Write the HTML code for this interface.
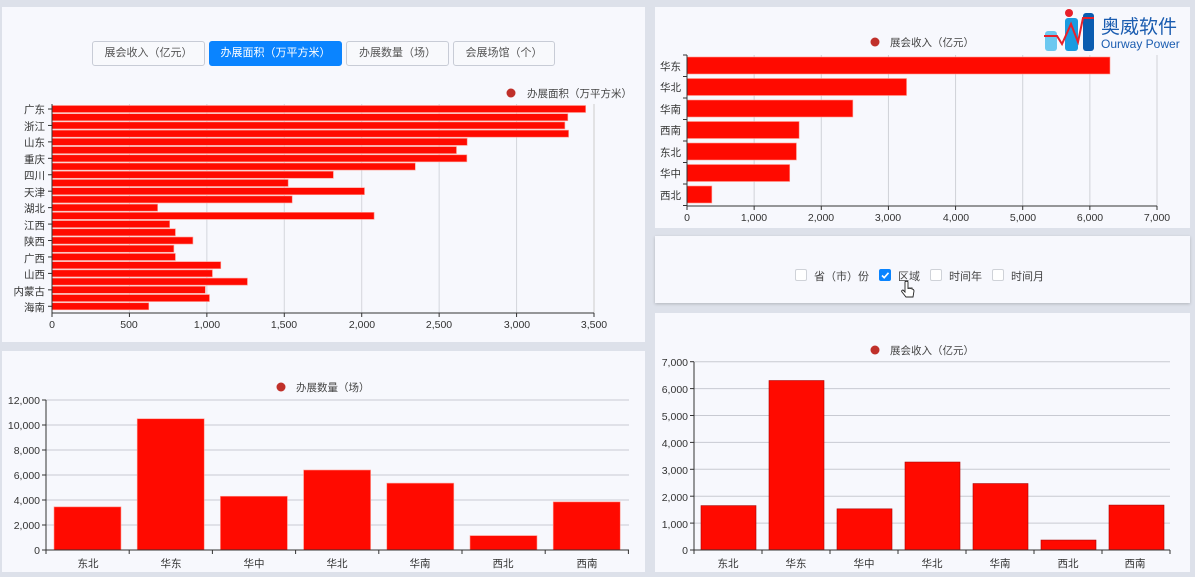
<!DOCTYPE html>
<html><head><meta charset="utf-8">
<style>
*{margin:0;padding:0;box-sizing:border-box}
body{width:1195px;height:577px;background:#dde1ea;position:relative;overflow:hidden;font-family:"Liberation Sans","Noto Sans CJK SC",sans-serif;color:#333}
.p{position:absolute;background:#f7f8fd}
svg{position:absolute;left:0;top:0}
.btn{position:absolute;top:41px;height:25px;border:1px solid #c8ccd6;border-radius:3px;background:#f8f9fc;font-size:11px;color:#555;text-align:center;line-height:23px}
.btn.on{background:#0a84ff;border-color:#0a84ff;color:#fff}
.cb{position:absolute;top:269px;width:12px;height:12px;border:1px solid #cfd2d8;background:#fff;border-radius:2px}
.cl{position:absolute;top:268px;font-size:11px;color:#444}
</style></head><body>
<div class="p" style="left:2px;top:7px;width:643px;height:335px"></div>
<div class="p" style="left:2px;top:351px;width:643px;height:221px"></div>
<div class="p" style="left:655px;top:7px;width:535px;height:221px"></div>
<div class="p" style="left:655px;top:236px;width:535px;height:67px;box-shadow:0 1px 3px rgba(0,0,0,.2)"></div>
<div class="p" style="left:655px;top:313px;width:535px;height:259px"></div>

<div class="btn" style="left:92px;width:113px">展会收入（亿元）</div>
<div class="btn on" style="left:209px;width:133px">办展面积（万平方米）</div>
<div class="btn" style="left:346px;width:103px">办展数量（场）</div>
<div class="btn" style="left:453px;width:102px">会展场馆（个）</div>

<div class="cb" style="left:795px"></div><div class="cl" style="left:814px">省（市）份</div>
<div class="cb" style="left:879px;background:#0a84ff;border-color:#0a84ff"><svg width="12" height="12" style="left:-1px;top:-1px"><path d="M3 6.5L5.2 8.7L9.5 3.8" stroke="#fff" stroke-width="1.6" fill="none"/></svg></div><div class="cl" style="left:898px">区域</div>
<div class="cb" style="left:930px"></div><div class="cl" style="left:949px">时间年</div>
<div class="cb" style="left:992px"></div><div class="cl" style="left:1011px">时间月</div>

<svg width="1195" height="577" font-family="Liberation Sans,Noto Sans CJK SC,sans-serif" font-size="10.5" fill="#333">
<g id="tl"></g><g id="tr"></g><g id="bl"></g><g id="br"></g>
<circle cx="511" cy="93" r="4.5" fill="#c0302a"/><text x="527" y="97" fill="#444">办展面积（万平方米）</text>
<circle cx="875" cy="42" r="4.5" fill="#c0302a"/><text x="890" y="46" fill="#444">展会收入（亿元）</text>
<circle cx="281" cy="387" r="4.5" fill="#c0302a"/><text x="296" y="391" fill="#444">办展数量（场）</text>
<circle cx="875" cy="350" r="4.5" fill="#c0302a"/><text x="890" y="354" fill="#444">展会收入（亿元）</text>
<g text-anchor="end">
<text x="45" y="113">广东</text><text x="45" y="130">浙江</text><text x="45" y="146">山东</text><text x="45" y="163">重庆</text><text x="45" y="179">四川</text><text x="45" y="196">天津</text><text x="45" y="212">湖北</text><text x="45" y="229">江西</text><text x="45" y="245">陕西</text><text x="45" y="262">广西</text><text x="45" y="278">山西</text><text x="45" y="295">内蒙古</text><text x="45" y="311">海南</text>
</g>
<g text-anchor="middle">
<text x="52" y="328">0</text><text x="129" y="328">500</text><text x="207" y="328">1,000</text><text x="284" y="328">1,500</text><text x="362" y="328">2,000</text><text x="439" y="328">2,500</text><text x="517" y="328">3,000</text><text x="594" y="328">3,500</text>
</g>
<g text-anchor="end">
<text x="681" y="70">华东</text><text x="681" y="91">华北</text><text x="681" y="113">华南</text><text x="681" y="134">西南</text><text x="681" y="156">东北</text><text x="681" y="177">华中</text><text x="681" y="199">西北</text>
</g>
<g text-anchor="middle">
<text x="687" y="221">0</text><text x="754" y="221">1,000</text><text x="821" y="221">2,000</text><text x="888" y="221">3,000</text><text x="956" y="221">4,000</text><text x="1023" y="221">5,000</text><text x="1090" y="221">6,000</text><text x="1157" y="221">7,000</text>
</g>
<g text-anchor="end">
<text x="40" y="404">12,000</text><text x="40" y="429">10,000</text><text x="40" y="454">8,000</text><text x="40" y="479">6,000</text><text x="40" y="504">4,000</text><text x="40" y="529">2,000</text><text x="40" y="554">0</text>
</g>
<g text-anchor="middle">
<text x="88" y="567">东北</text><text x="171" y="567">华东</text><text x="254" y="567">华中</text><text x="337" y="567">华北</text><text x="420" y="567">华南</text><text x="503" y="567">西北</text><text x="587" y="567">西南</text>
</g>
<g text-anchor="end">
<text x="688" y="366">7,000</text><text x="688" y="393">6,000</text><text x="688" y="420">5,000</text><text x="688" y="447">4,000</text><text x="688" y="474">3,000</text><text x="688" y="501">2,000</text><text x="688" y="528">1,000</text><text x="688" y="554">0</text>
</g>
<g text-anchor="middle">
<text x="728" y="567">东北</text><text x="796" y="567">华东</text><text x="864" y="567">华中</text><text x="932" y="567">华北</text><text x="1000" y="567">华南</text><text x="1068" y="567">西北</text><text x="1135" y="567">西南</text>
</g>
<rect x="1045" y="31" width="12" height="20" rx="3" fill="#6cc8f0"/>
<rect x="1065" y="18" width="13" height="33" rx="3" fill="#1a9be0"/>
<rect x="1083" y="13" width="11" height="38" rx="3" fill="#0a5cb0"/>
<circle cx="1069" cy="13" r="4" fill="#e8202a"/>
<path d="M1044 36H1057L1062 44L1071 24L1078 42L1083 18H1094" stroke="#e8202a" stroke-width="2" fill="none"/>
<text x="1101" y="33" font-size="19" fill="#1a5cb0">奥威软件</text>
<text x="1101" y="48" font-size="12" fill="#1a5cb0">Ourway Power</text>
<path d="M905 282v10l-2-2c-1 0-2 1-1 2l4 5h7l1-6c0-1-1-2-2-2v-1c-1 0-2 0-2 1v-1c-1 0-2 0-2 1v-7c0-1-3-1-3 0z" fill="#fff" stroke="#222" stroke-width="0.9"/>
</svg>
<script>
var NS="http://www.w3.org/2000/svg";
function el(g,t,a){var e=document.createElementNS(NS,t);for(var k in a)e.setAttribute(k,a[k]);document.getElementById(g).appendChild(e);}
var x0=52,w=542;
for(var i=0;i<=7;i++){var x=x0+w*i/7;el("tl","line",{x1:x,x2:x,y1:104,y2:313,stroke:i==7?"#ccc":"#d4d6dc"});}
var v=[3446,3331,3312,3336,2681,2612,2679,2346,1817,1525,2018,1551,682,2080,760,797,910,787,797,1090,1036,1262,990,1017,625];
v.forEach(function(a,i){el("tl","rect",{x:x0,y:105.5+i*8.22,width:a/3500*w,height:7,fill:"#ff0a00",stroke:"#ff9a90","stroke-width":0.6});});
el("tl","line",{x1:x0,x2:x0,y1:104,y2:313,stroke:"#333"});el("tl","line",{x1:x0,x2:594,y1:313,y2:313,stroke:"#333"});
for(var i=0;i<=7;i++){var x=x0+w*i/7;el("tl","line",{x1:x,x2:x,y1:313,y2:317,stroke:"#333"});}
for(var i=0;i<13;i++){el("tl","line",{x1:48,x2:52,y1:109+i*16.44,y2:109+i*16.44,stroke:"#333"});}
x0=687;w=470;
for(var i=1;i<=7;i++){var x=x0+w*i/7;el("tr","line",{x1:x,x2:x,y1:55,y2:206,stroke:"#d0d2d8"});}
[6300,3270,2470,1670,1630,1530,370].forEach(function(a,i){el("tr","rect",{x:x0,y:57+i*21.5,width:a/7000*w,height:17,fill:"#ff0a00",stroke:"#ff9a90","stroke-width":0.6});});
el("tr","line",{x1:x0,x2:x0,y1:55,y2:206,stroke:"#333"});el("tr","line",{x1:x0,x2:1157,y1:206,y2:206,stroke:"#333"});
for(var i=0;i<=7;i++){var x=x0+w*i/7;el("tr","line",{x1:x,x2:x,y1:206,y2:210,stroke:"#333"});}
for(var i=0;i<=7;i++){var y=55+i*21.5;el("tr","line",{x1:683,x2:687,y1:y,y2:y,stroke:"#333"});}
for(var i=1;i<=6;i++){var y=550-i*25;el("bl","line",{x1:46,x2:629,y1:y,y2:y,stroke:"#c8cad2"});}
[3450,10500,4300,6400,5350,1150,3850].forEach(function(a,i){var h=a/12000*150;el("bl","rect",{x:54+i*83.2,y:550-h,width:67,height:h,fill:"#ff0a00",stroke:"#ff9a90","stroke-width":0.6});});
el("bl","line",{x1:46,x2:46,y1:400,y2:550,stroke:"#333"});el("bl","line",{x1:46,x2:629,y1:550,y2:550,stroke:"#333"});
for(var i=0;i<=7;i++){var x=46+i*83.2;el("bl","line",{x1:x,x2:x,y1:550,y2:554,stroke:"#333"});}
for(var i=0;i<=6;i++){var y=550-i*25;el("bl","line",{x1:42,x2:46,y1:y,y2:y,stroke:"#333"});}
for(var i=1;i<=7;i++){var y=550-i*26.9;el("br","line",{x1:694,x2:1170,y1:y,y2:y,stroke:"#c8cad2"});}
[1650,6300,1530,3270,2470,370,1670].forEach(function(a,i){var h=a/7000*188.3;el("br","rect",{x:701+i*68,y:550-h,width:55,height:h,fill:"#ff0a00",stroke:"#a00","stroke-width":0.6});});
el("br","line",{x1:694,x2:694,y1:362,y2:550,stroke:"#333"});el("br","line",{x1:694,x2:1170,y1:550,y2:550,stroke:"#333"});
for(var i=0;i<=7;i++){var x=694+i*68;el("br","line",{x1:x,x2:x,y1:550,y2:554,stroke:"#333"});}
for(var i=0;i<=7;i++){var y=550-i*26.9;el("br","line",{x1:690,x2:694,y1:y,y2:y,stroke:"#333"});}
</script>
</body></html>
